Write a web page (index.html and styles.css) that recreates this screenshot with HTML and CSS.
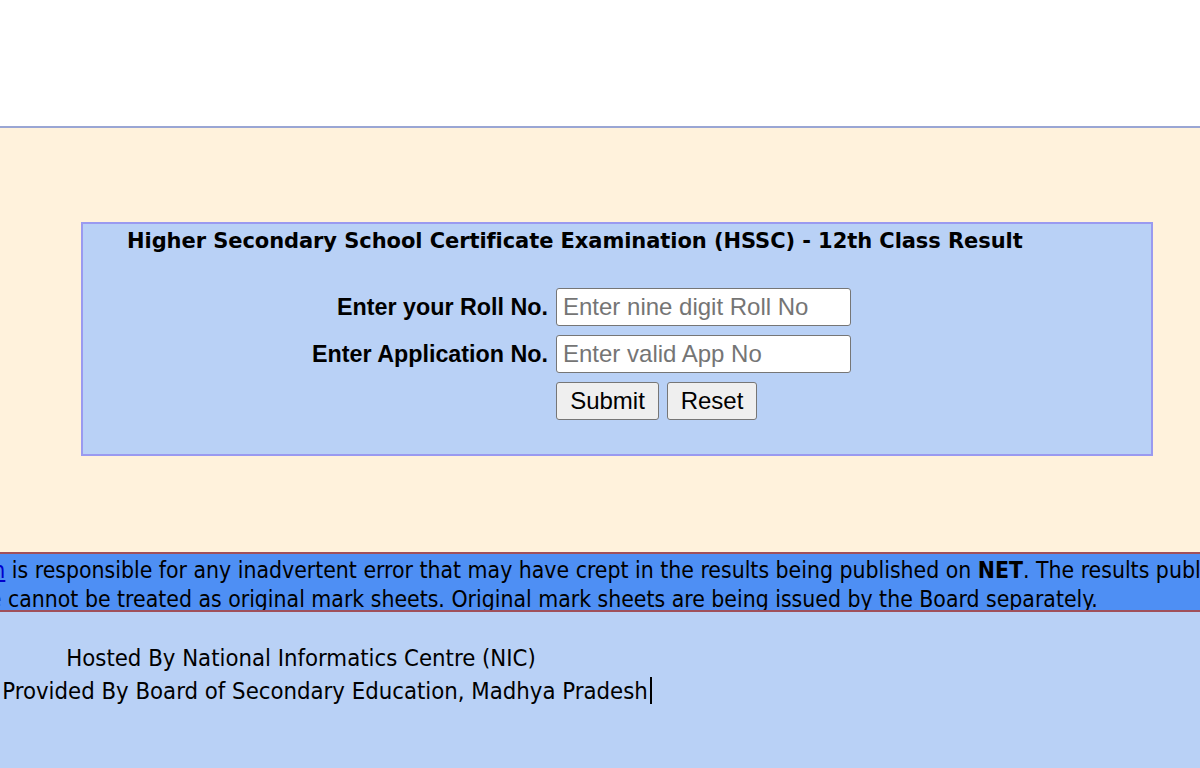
FILE: index.html
```html
<!DOCTYPE html>
<html>
<head>
<meta charset="utf-8">
<title>HSSC Result</title>
<link rel="stylesheet" href="styles.css">
</head>
<body>
<div class="top"></div>
<div class="main">
  <form class="box" onsubmit="return false">
    <h1 class="title">Higher Secondary School Certificate Examination (HSSC) - 12th Class Result</h1>
    <div class="grid">
      <label class="lbl" for="roll">Enter your Roll No.</label>
      <input class="inp" id="roll" type="text" placeholder="Enter nine digit Roll No">
      <label class="lbl" for="app">Enter Application No.</label>
      <input class="inp" id="app" type="text" placeholder="Enter valid App No">
      <span></span>
      <div class="btns">
        <button class="btn btn-submit" type="submit">Submit</button>
        <button class="btn btn-reset" type="reset">Reset</button>
      </div>
    </div>
  </form>
</div>
<div class="notice">
  <p class="notice-text"><a href="#" class="nlink">Admin</a> is responsible for any inadvertent error that may have crept in the results being published on <b>NET</b>. The results published on net are for immediate information to the examinees.<br>These cannot be treated as original mark sheets. Original mark sheets are being issued by the Board separately.</p>
</div>
<div class="footer">
  <div class="foot-col">
    <div class="fline">Hosted By National Informatics Centre (NIC)</div>
    <div class="fline">Plan Provided By Board of Secondary Education, Madhya Pradesh<span class="caret"></span></div>
  </div>
</div>
</body>
</html>
```
FILE: styles.css
```css
html, body { margin: 0; padding: 0; }
body { width: 1200px; height: 768px; overflow: hidden; background: #b9d1f6; font-family: "DejaVu Sans", sans-serif; }
.top { height: 126px; background: #fff; border-bottom: 2px solid #9aa6d4; }
.main { background: #fff2dc; height: 424px; padding: 94px 0 0 34px; box-sizing: border-box; display: flex; justify-content: center; }
.box { width: 1068px; height: 230px; background: #b9d1f6; border: 2px solid #9a9af0; margin: 0; }
.title { font-family: "DejaVu Sans", sans-serif; font-weight: bold; font-size: 21px; margin: 5px 0 0 44px; color: #000; letter-spacing: -0.07px; }
.grid { display: grid; grid-template-columns: 465px auto; column-gap: 8px; row-gap: 9px; margin-top: 35px; align-items: center; }
.lbl { font-family: "Liberation Sans", Arial, sans-serif; font-weight: bold; font-size: 23.3px; text-align: right; color: #000; }
.inp { width: 295px; height: 38px; box-sizing: border-box; border: 1px solid #767676; border-radius: 3px; font-family: "Liberation Sans", Arial, sans-serif; font-size: 24px; padding: 0 6px; background: #fff; }
.inp::placeholder { color: #757575; }
.btns { display: flex; gap: 8px; }
.btn { height: 38px; font-family: "Liberation Sans", Arial, sans-serif; font-size: 24px; background: #efefef; border: 1px solid #767676; border-radius: 3px; padding: 0; color: #000; }
.btn-submit { width: 103px; }
.btn-reset { width: 90px; }
.notice { background: #4e8ff4; border-top: 2px solid #a0505a; border-bottom: 2px solid #a0505a; height: 56px; display: flex; justify-content: center; overflow: hidden; }
.notice-text { flex: none; width: 1320px; margin: 2px 0 0; font-family: "DejaVu Sans Condensed", "DejaVu Sans", sans-serif; font-size: 22.8px; line-height: 29px; color: #000; white-space: nowrap; }
.nlink { color: #0000cc; }
.footer { padding-top: 30px; }
.foot-col { width: 602px; display: flex; flex-direction: column; align-items: center; }
.fline { white-space: nowrap; font-family: "DejaVu Sans Condensed", "DejaVu Sans", sans-serif; font-size: 23.7px; line-height: 33px; color: #000; }
.caret { display: inline-block; width: 2px; height: 27px; background: #000; vertical-align: -5px; margin-left: 2px; }
```
